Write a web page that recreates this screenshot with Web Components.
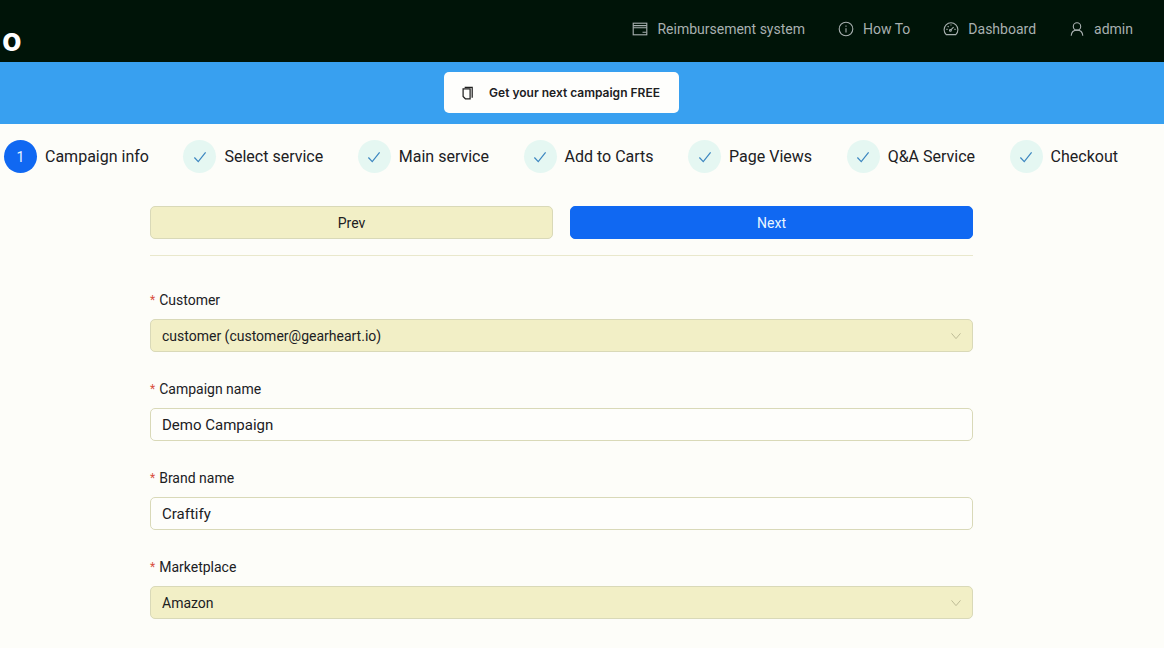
<!DOCTYPE html>
<html lang="en">
<head>
<meta charset="utf-8">
<title>Campaign info</title>
<style>
  body { margin: 0; background: #fdfdf9; color: #20201f; font-family: Roboto, "Liberation Sans", sans-serif; font-size: 14px; line-height: 24px; }
</style>
</head>
<body>
<campaign-app></campaign-app>
<script>
const icons = {
  card: '<rect x="1.2" y="2.2" width="13.6" height="11.6"/><path d="M1.2 4.6h13.6M1.2 6.8h13.6M10.5 11.2h4"/>',
  info: '<circle cx="8" cy="8" r="6.8"/><path d="M8 7.2v4.2M8 4.4v1.4"/>',
  dash: '<path d="M3.2 13.6A6.9 6.9 0 1 1 12.8 13.6Z"/><path d="M7.6 9.2l3-3M8 3.4v1.2M3.4 8.4h1.2M11.4 8.4h1.2M4.7 5.1l.9.9"/><circle cx="7.4" cy="9.4" r=".9"/>',
  user: '<circle cx="8" cy="5.4" r="3.7"/><path d="M2.2 14.8c.2-3.4 2.4-5.7 5.8-5.7s5.600 2.300 5.800 5.700"/>',
  copy: '<path d="M4.200 1.600h8.600v11.800"/><path d="M2.400 3.200h8v11.400H5l-2.600-2.600z"/>',
  check: '<path d="M1.600 8.600l4.400 4.600L14.400 2.800"/>',
  down: '<path d="M2 4.500l6 7 6-7"/>'
};
const icon = (name, width = 1.1) =>
  `<svg viewBox="0 0 16 16" fill="none" stroke="currentColor" stroke-width="${width}" aria-hidden="true">${icons[name]}</svg>`;

function define(tag, render) {
  customElements.define(tag, class extends HTMLElement {
    constructor() {
      super();
      this.attachShadow({ mode: 'open' });
    }
    connectedCallback() {
      this.shadowRoot.innerHTML = render(this);
    }
  });
}

define('nav-link', el => `
  <style>
    :host { display: block; }
    a { display: flex; align-items: center; gap: 9px; color: #a8b0b0; text-decoration: none; white-space: nowrap; }
    svg { width: 16px; height: 16px; }
  </style>
  <a href="#">${icon(el.getAttribute('icon'))}<slot></slot></a>`);

define('site-header', () => `
  <style>
    :host { display: block; background: #001408; }
    header { display: flex; justify-content: space-between; height: 62px; padding: 0 31px 0 2px; }
    .logo { color: #fff; font-family: Inter, sans-serif; font-size: 32px; font-weight: 700; line-height: 32px; padding-top: 24px; text-decoration: none; }
    nav { display: flex; gap: 33px; height: 58px; align-items: center; }
  </style>
  <header>
    <a class="logo" href="#">o</a>
    <nav>
      <nav-link icon="card">Reimbursement system</nav-link>
      <nav-link icon="info">How To</nav-link>
      <nav-link icon="dash">Dashboard</nav-link>
      <nav-link icon="user">admin</nav-link>
    </nav>
  </header>`);

define('promo-banner', () => `
  <style>
    :host { display: flex; justify-content: center; background: #38a0f0; padding: 10px 41px 11px 0; }
    button { display: flex; align-items: center; gap: 14px; height: 41px; padding: 0 19px 0 17px; border: 0; border-radius: 5px; background: #fefefc; color: #20201f; font: 600 12px/20px Inter, sans-serif; }
    svg { width: 14px; height: 14px; }
  </style>
  <button type="button">${icon('copy', 1.4)}<slot></slot></button>`);

define('wizard-step', el => {
  const number = el.getAttribute('number');
  return `
  <style>
    :host { display: flex; align-items: center; gap: 8px; font-size: 16px; white-space: nowrap; }
    .mark { display: grid; place-items: center; width: 33px; height: 33px; border-radius: 50%; background: #e5f7f2; color: #3c86c0; font-size: 14px; }
    .mark.current { background: #1068f2; color: #e8f6ff; }
    svg { width: 14px; height: 14px; }
  </style>
  <span class="mark ${number ? 'current' : ''}">${number || icon('check', 1.4)}</span><slot></slot>`;
});

define('wizard-steps', () => `
  <style>
    :host { display: flex; justify-content: space-between; padding: 16px 46px 0 4px; }
  </style>
  <slot></slot>`);

define('action-button', el => `
  <style>
    :host { display: block; }
    button { width: 100%; height: 33px; border: 1px solid #d9d9b8; border-radius: 5px; background: #f2efc6; color: #20201f; font: inherit; }
    button.primary { background: #1068f2; border-color: #1068f2; color: #e8f6ff; }
  </style>
  <button type="button" class="${el.hasAttribute('primary') ? 'primary' : ''}"><slot></slot></button>`);

define('form-field', el => {
  const value = el.getAttribute('value');
  const control = el.hasAttribute('select')
    ? `<select id="control" disabled><option>${value}</option></select>${icon('down')}`
    : `<input id="control" type="text" value="${value}" required>`;
  return `
  <style>
    :host { display: grid; gap: 7px; }
    label { display: flex; gap: 4px; }
    label::before { content: "*"; color: #d85040; font-size: 12px; }
    .box { display: grid; align-items: center; }
    input, select, svg { grid-area: 1 / 1; }
    input, select { box-sizing: border-box; width: 100%; height: 33px; margin: 0; padding: 0 11px; border: 1px solid #d9d9b8; border-radius: 5px; background: #fefefb; color: #20201f; font: inherit; appearance: none; opacity: 1; }
    input { font-size: 15px; }
    select { background: #f2efc6; }
    svg { justify-self: end; width: 12px; height: 12px; margin-right: 11px; color: #b2b08c; pointer-events: none; }
  </style>
  <label for="control">${el.getAttribute('label')}</label>
  <div class="box">${control}</div>`;
});

define('campaign-form', () => `
  <style>
    :host { display: block; padding: 33px 191px 0 150px; }
    .actions { display: grid; grid-template-columns: 1fr 1fr; gap: 17px; padding-bottom: 16px; border-bottom: 1px solid #e9e8cc; }
    form { display: grid; gap: 25px; padding: 32px 0 28px; }
  </style>
  <div class="actions">
    <action-button>Prev</action-button>
    <action-button primary>Next</action-button>
  </div>
  <form>
    <form-field select label="Customer" value="customer (customer@gearheart.io)"></form-field>
    <form-field label="Campaign name" value="Demo Campaign"></form-field>
    <form-field label="Brand name" value="Craftify"></form-field>
    <form-field select label="Marketplace" value="Amazon"></form-field>
  </form>`);

define('campaign-app', () => `
  <style>:host { display: block; }</style>
  <site-header></site-header>
  <promo-banner>Get your next campaign FREE</promo-banner>
  <main>
    <wizard-steps>
      <wizard-step number="1">Campaign info</wizard-step>
      <wizard-step>Select service</wizard-step>
      <wizard-step>Main service</wizard-step>
      <wizard-step>Add to Carts</wizard-step>
      <wizard-step>Page Views</wizard-step>
      <wizard-step>Q&amp;A Service</wizard-step>
      <wizard-step>Checkout</wizard-step>
    </wizard-steps>
    <campaign-form></campaign-form>
  </main>`);
</script>
</body>
</html>
